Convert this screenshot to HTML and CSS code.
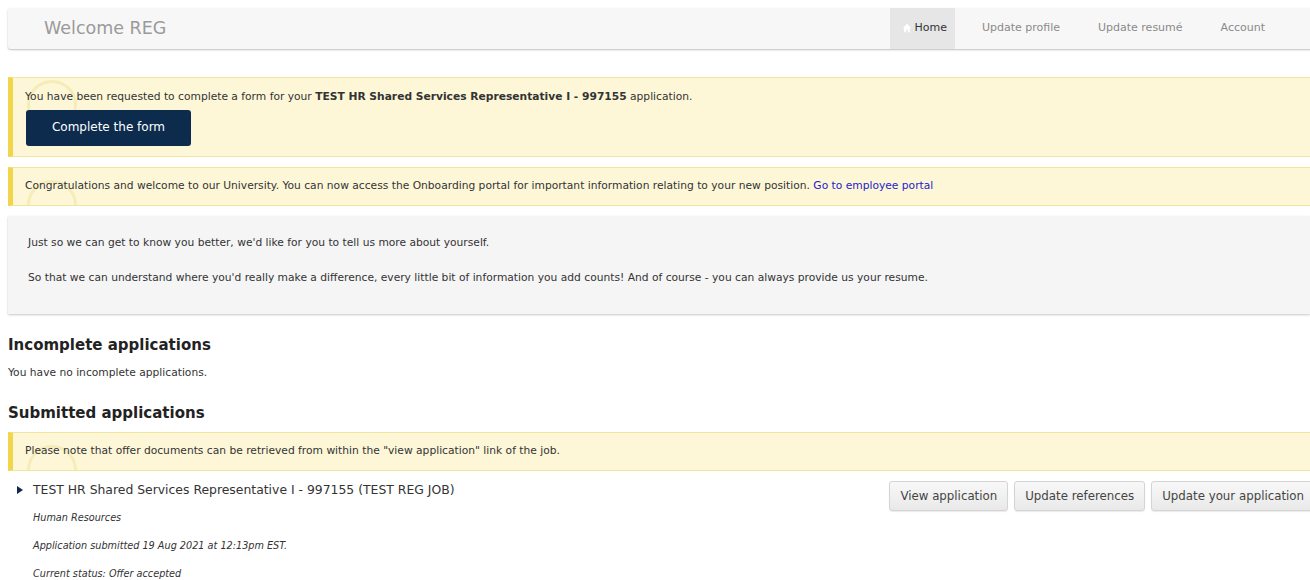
FILE: index.html
```html
<!DOCTYPE html>
<html lang="en">
<head>
<meta charset="utf-8">
<title>Welcome REG</title>
<link rel="stylesheet" href="styles.css">
</head>
<body>
<header class="topbar">
  <div class="brand">Welcome REG</div>
  <nav class="nav">
    <a class="nav-item active" href="#"><svg class="home-ico" viewBox="0 0 12 12" width="10" height="10"><path d="M6 1 L11 6 L9.5 6 L9.5 11 L7 11 L7 8 L5 8 L5 11 L2.5 11 L2.5 6 L1 6 Z" fill="#fff"/></svg>Home</a>
    <a class="nav-item" href="#">Update profile</a>
    <a class="nav-item" href="#">Update resumé</a>
    <a class="nav-item" href="#">Account</a>
  </nav>
</header>

<main class="content">
  <div class="alert alert-tall">
    <p>You have been requested to complete a form for your <b>TEST HR Shared Services Representative I - 997155</b> application.</p>
    <a class="btn-primary" href="#">Complete the form</a>
  </div>

  <div class="alert alert-wide">
    <p>Congratulations and welcome to our University. You can now access the Onboarding portal for important information relating to your new position. <a class="link" href="#">Go to employee portal</a></p>
  </div>

  <div class="intro">
    <p>Just so we can get to know you better, we'd like for you to tell us more about yourself.</p>
    <p>So that we can understand where you'd really make a difference, every little bit of information you add counts! And of course - you can always provide us your resume.</p>
  </div>

  <h2 class="section-title">Incomplete applications</h2>
  <p class="note">You have no incomplete applications.</p>

  <h2 class="section-title second">Submitted applications</h2>
  <div class="alert">
    <p>Please note that offer documents can be retrieved from within the "view application" link of the job.</p>
  </div>

  <div class="app-row">
    <div class="app-info">
      <div class="app-title"><span class="caret"></span>TEST HR Shared Services Representative I - 997155 (TEST REG JOB)</div>
      <p class="meta">Human Resources</p>
      <p class="meta">Application submitted 19 Aug 2021 at 12:13pm EST.</p>
      <p class="meta">Current status: Offer accepted</p>
    </div>
    <div class="app-actions">
      <a class="btn" href="#">View application</a>
      <a class="btn" href="#">Update references</a>
      <a class="btn" href="#">Update your application</a>
    </div>
  </div>
</main>
</body>
</html>
```

FILE: styles.css
```css
html, body {
  margin: 0;
  padding: 0;
  background: #fff;
}

body {
  padding: 8px 0 0 8px;
  overflow: hidden;
  font-family: "DejaVu Sans", Verdana, sans-serif;
  font-size: 10.7px;
  line-height: 12.6px;
  color: #333;
}

a { text-decoration: none; }

/* top navigation bar */
.topbar {
  display: flex;
  align-items: stretch;
  justify-content: space-between;
  height: 41px;
  margin-right: -6px;
  background: #f7f7f7;
  border-radius: 3px 0 0 3px;
  box-shadow: 0 1px 2px rgba(0, 0, 0, 0.25);
}

.brand {
  display: flex;
  align-items: center;
  padding-left: 36px;
  font-size: 17.5px;
  color: #9a9a9a;
}

.nav {
  display: flex;
  padding-right: 32px;
}

.nav-item {
  display: flex;
  align-items: center;
  padding: 0 19px;
  font-size: 11px;
  color: #8a8a8a;
}

.nav-item.active {
  background: #e6e6e6;
  color: #333;
  padding: 0 8px 0 12px;
  margin-right: 8px;
}

.home-ico { margin-right: 2px; margin-top: -2px; }

/* notices */
.content {
  padding-top: 28px;
}

.alert {
  position: relative;
  overflow: hidden;
  background: #fdf7d8;
  border: 1px solid #f1e49c;
  border-left: 5px solid #f2d54b;
  border-right: 0;
  padding: 12px;
  margin-bottom: 10px;
}

.alert-wide { padding-bottom: 13px; }

.alert::before {
  content: "";
  position: absolute;
  left: 14px;
  top: 12px;
  width: 44px;
  height: 44px;
  border: 3px solid #f6ecb8;
  border-radius: 50%;
}

.alert-tall::before { top: 2px; }

.alert p {
  position: relative;
  margin: 0;
  color: #333;
}

.alert-tall {
  padding: 13px 12px 10px;
}

.btn-primary {
  position: relative;
  display: block;
  margin-top: 6px;
  margin-left: 1px;
  width: 165px;
  height: 36px;
  line-height: 35px;
  text-align: center;
  background: #0c2b4d;
  color: #fff;
  font-size: 12px;
  border-radius: 3px;
}

.link { color: #1f22c8; }

.intro {
  background: #f5f5f6;
  padding: 21px 20px 30px;
  box-shadow: 0 1px 2px rgba(0, 0, 0, 0.22);
}

.intro p {
  margin: 0 0 22px;
  color: #333;
}

.intro p:last-child { margin-bottom: 0; }

/* application lists */
.section-title {
  margin: 23px 0 12px;
  font-size: 15px;
  line-height: 17.5px;
  font-weight: bold;
  color: #222;
}

.section-title.second { margin-top: 26px; margin-bottom: 9px; }

.note {
  margin: 0;
  color: #333;
}

.app-row {
  display: flex;
  justify-content: space-between;
}

.app-info {
  padding-left: 9px;
}

.app-title {
  display: flex;
  align-items: center;
  font-size: 12.4px;
  line-height: 14.4px;
  color: #333;
  margin-top: 2px;
}

.caret {
  width: 0;
  height: 0;
  border-top: 4.5px solid transparent;
  border-bottom: 4.5px solid transparent;
  border-left: 6px solid #14284a;
  margin-right: 10px;
}

.meta {
  margin: 16.5px 0 0 16px;
  font-style: italic;
  font-size: 9.7px;
  line-height: 11.3px;
  color: #333;
}

.meta:first-of-type { margin-top: 15px; }

.app-actions {
  display: flex;
  align-items: flex-start;
  gap: 6px;
  margin-right: -5px;
}

.btn {
  display: inline-block;
  height: 28px;
  line-height: 28px;
  padding: 0 10px;
  font-size: 11.8px;
  color: #444;
  background: linear-gradient(#f8f8f8, #e9e9e9);
  border: 1px solid #d4d4d4;
  border-radius: 3px;
  box-shadow: 0 1px 1px rgba(0, 0, 0, 0.08);
}
```
